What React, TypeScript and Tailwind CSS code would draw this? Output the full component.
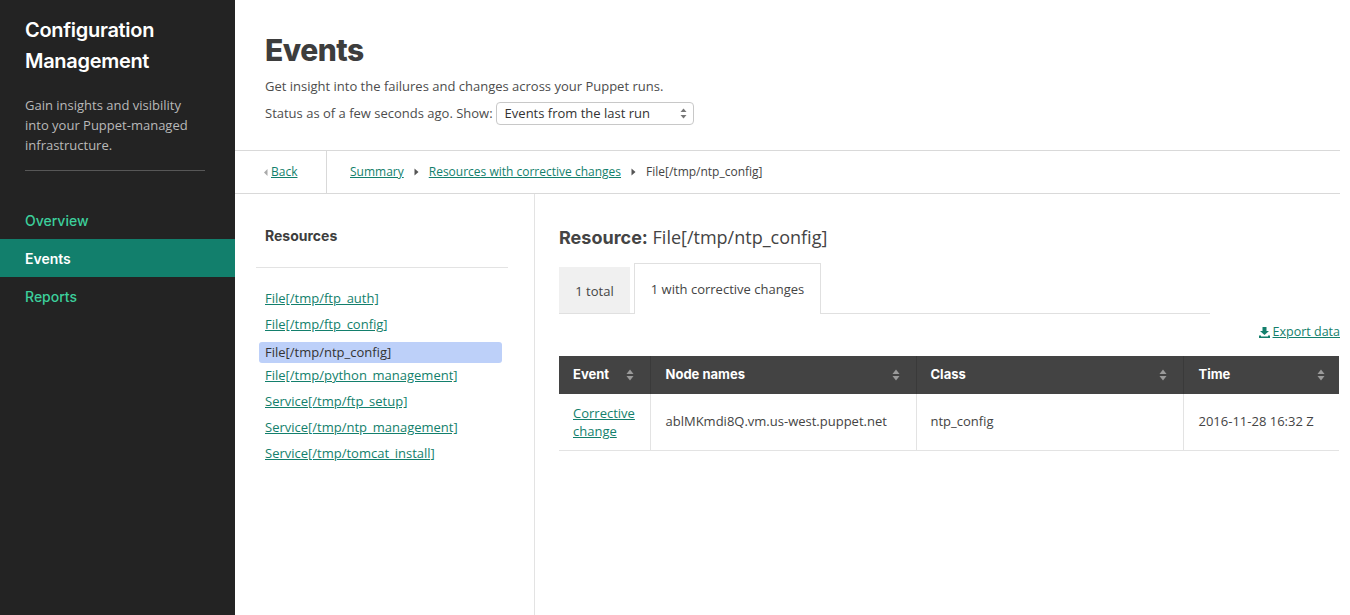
import React from "react";

const SortIcon = () => (
  <svg width="8" height="12" viewBox="0 0 8 12" className="shrink-0">
    <path d="M4 0.5 L7.5 5 L0.5 5 Z" fill="#9a9a9a" />
    <path d="M4 11.5 L7.5 7 L0.5 7 Z" fill="#9a9a9a" />
  </svg>
);

const Caret = () => (
  <svg width="5" height="8" viewBox="0 0 5 8" className="shrink-0">
    <path d="M0.5 0.5 L4.5 4 L0.5 7.5 Z" fill="#555" />
  </svg>
);

const resources = [
  "File[/tmp/ftp_auth]",
  "File[/tmp/ftp_config]",
  "File[/tmp/ntp_config]",
  "File[/tmp/python_management]",
  "Service[/tmp/ftp_setup]",
  "Service[/tmp/ntp_management]",
  "Service[/tmp/tomcat_install]",
];

export default function App() {
  const head = { fontFamily: "Inter, 'Noto Sans', sans-serif" };
  const body = { fontFamily: "'Open Sans', 'Noto Sans', sans-serif" };
  return (
    <div className="flex w-[1350px] h-[615px] overflow-hidden bg-white" style={body}>
      {/* Sidebar */}
      <aside className="w-[235px] shrink-0 bg-[#232323] flex flex-col">
        <div className="px-[25px] pt-[15px]">
          <h1 className="text-white text-[20px] leading-[31px] font-semibold tracking-[-0.3px]" style={head}>
            Configuration
            <br />
            Management
          </h1>
          <p className="mt-[18px] w-[165px] text-[13px] leading-[20px] text-[#b9b9b9]">
            Gain insights and visibility into your Puppet-managed infrastructure.
          </p>
          <div className="mt-[15px] w-[180px] h-px bg-[#575757]" />
        </div>
        <nav className="mt-[30px] flex flex-col text-[14px]" style={head}>
          <a className="h-[38px] flex items-center px-[25px] text-[#3ccf9b] font-medium">Overview</a>
          <a className="h-[38px] flex items-center px-[25px] bg-[#127f6c] text-white font-semibold">Events</a>
          <a className="h-[38px] flex items-center px-[25px] text-[#3ccf9b] font-medium">Reports</a>
        </nav>
      </aside>

      {/* Main */}
      <main className="flex-1 flex flex-col pr-[10px]">
        <header className="pl-[30px] pt-[30px] h-[150px]">
          <h2 className="text-[30px] leading-[40px] font-extrabold text-[#3d3d3d] tracking-[-0.5px]" style={head}>
            Events
          </h2>
          <p className="mt-[7px] text-[13px] leading-[18px] text-[#4d4d4d]">
            Get insight into the failures and changes across your Puppet runs.
          </p>
          <div className="mt-[7px] flex items-center text-[13px] text-[#4d4d4d]">
            <span>Status as of a few seconds ago. Show:</span>
            <div className="ml-[3px] w-[198px] h-[23px] border border-[#c8c8c8] rounded-[4px] flex items-center justify-between pl-[8px] pr-[6px] text-[#333]">
              <span>Events from the last run</span>
              <svg width="7" height="11" viewBox="0 0 7 11">
                <path d="M3.5 0.5 L6.5 4 L0.5 4 Z" fill="#777" />
                <path d="M3.5 10.5 L6.5 7 L0.5 7 Z" fill="#777" />
              </svg>
            </div>
          </div>
        </header>

        {/* Breadcrumb bar */}
        <div className="h-[44px] border-t border-b border-[#d9d9d9] flex items-stretch text-[12px]">
          <div className="w-[92px] border-r border-[#d9d9d9] flex items-center pl-[29px] gap-[3px]">
            <svg width="4" height="7" viewBox="0 0 4 7">
              <path d="M3.5 0 L0 3.5 L3.5 7 Z" fill="#aaa" />
            </svg>
            <a className="text-[#137f6c] underline">Back</a>
          </div>
          <div className="flex items-center pl-[23px] gap-[10px] text-[#444]">
            <a className="text-[#137f6c] underline">Summary</a>
            <Caret />
            <a className="text-[#137f6c] underline">Resources with corrective changes</a>
            <Caret />
            <span>File[/tmp/ntp_config]</span>
          </div>
        </div>

        <div className="flex flex-1">
          {/* Resources list */}
          <section className="w-[300px] shrink-0 border-r border-[#e3e3e3] pt-[32px] pl-[21px] pr-[26px]">
            <h3 className="pl-[9px] text-[14px] font-bold text-[#3d3d3d] leading-[20px]" style={head}>
              Resources
            </h3>
            <div className="mt-[21px] h-px bg-[#e3e3e3]" />
            <ul className="mt-[18px] flex flex-col text-[13px]">
              {resources.map((r, i) =>
                i === 2 ? (
                  <li key={r} className="mt-[4px] ml-[3px] mr-[6px] h-[21px] pl-[6px] flex items-center rounded-[3px] bg-[#bdd0f9] text-[#333]">
                    {r}
                  </li>
                ) : (
                  <li key={r} className="h-[26px] flex items-center pl-[9px]">
                    <a className="text-[#137f6c] underline">{r}</a>
                  </li>
                )
              )}
            </ul>
          </section>

          {/* Detail */}
          <section className="flex-1 pl-[24px] pt-[31px]">
            <div className="text-[18px] leading-[24px] text-[#444]">
              <span className="font-bold" style={head}>Resource:</span> File[/tmp/ntp_config]
            </div>
            <div className="mt-[13px] w-[651px] flex items-end border-b border-[#e0e0e0] text-[13px] text-[#444]">
              <div className="h-[46px] w-[71px] bg-[#f0f0f0] flex items-center justify-center pt-[4px]">1 total</div>
              <div className="ml-[4px] h-[51px] w-[187px] bg-white border border-b-0 border-[#e0e0e0] -mb-px flex items-center justify-center pt-[2px]">
                1 with corrective changes
              </div>
            </div>
            <div className="mt-[9px] flex justify-end">
              <a className="flex items-center gap-[3px] text-[12.5px] text-[#137f6c] underline">
                <svg width="11" height="11" viewBox="0 0 11 11">
                  <path d="M3.5 0 H7.5 V4 H10 L5.5 8 L1 4 H3.5 Z" fill="#137f6c" />
                  <path d="M0 8.5 H2 V9.5 H9 V8.5 H11 V11 H0 Z" fill="#137f6c" />
                </svg>
                Export data
              </a>
            </div>
            <table className="mt-[14px] w-[780px] border-collapse text-[13px]">
              <thead>
                <tr className="bg-[#434343] text-white h-[38px]" style={head}>
                  <th className="w-[91px] text-left font-bold pl-[14px] pr-[16px]">
                    <div className="flex items-center justify-between">Event <SortIcon /></div>
                  </th>
                  <th className="w-[266px] text-left font-bold pl-[15px] pr-[16px] border-l border-[#3a3a3a]">
                    <div className="flex items-center justify-between">Node names <SortIcon /></div>
                  </th>
                  <th className="w-[267px] text-left font-bold pl-[14px] pr-[16px] border-l border-[#3a3a3a]">
                    <div className="flex items-center justify-between">Class <SortIcon /></div>
                  </th>
                  <th className="text-left font-bold pl-[15px] pr-[14px] border-l border-[#3a3a3a]">
                    <div className="flex items-center justify-between">Time <SortIcon /></div>
                  </th>
                </tr>
              </thead>
              <tbody>
                <tr className="h-[57px] border-b border-[#e3e3e3] text-[#444]">
                  <td className="pl-[14px] leading-[18px]">
                    <a className="text-[#137f6c] underline">Corrective change</a>
                  </td>
                  <td className="pl-[15px] border-l border-[#e3e3e3]">ablMKmdi8Q.vm.us-west.puppet.net</td>
                  <td className="pl-[14px] border-l border-[#e3e3e3]">ntp_config</td>
                  <td className="pl-[15px] border-l border-[#e3e3e3]">2016-11-28 16:32 Z</td>
                </tr>
              </tbody>
            </table>
          </section>
        </div>
      </main>
    </div>
  );
}
